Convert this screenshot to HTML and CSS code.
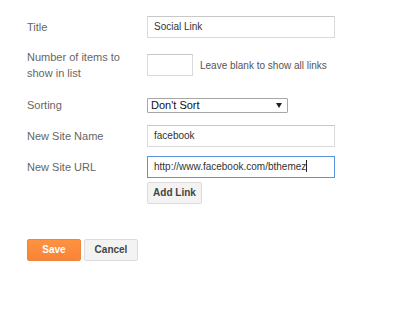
FILE: index.html
```html
<!DOCTYPE html>
<html>
<head>
<meta charset="utf-8">
<link rel="stylesheet" href="styles.css">
</head>
<body>
<div class="form">
  <div class="row r-title">
    <div class="label">Title</div>
    <div class="field"><div class="input wide">Social Link</div></div>
  </div>
  <div class="row r-num">
    <div class="label">Number of items to<br>show in list</div>
    <div class="field"><div class="input small"></div><span class="hint">Leave blank to show all links</span></div>
  </div>
  <div class="row r-sort">
    <div class="label">Sorting</div>
    <div class="field">
      <div class="select"><span>Don't Sort</span>
        <svg class="arrow" width="6" height="5" viewBox="0 0 6 5"><path d="M0 0H6L3 5Z" fill="#222"/></svg>
      </div>
    </div>
  </div>
  <div class="row r-name">
    <div class="label">New Site Name</div>
    <div class="field"><div class="input wide">facebook</div></div>
  </div>
  <div class="row r-url">
    <div class="label">New Site URL</div>
    <div class="field"><div class="input wide focus">http://www.facebook.com/bthemez<span class="caret"></span></div></div>
  </div>
  <div class="row r-add">
    <div class="label"></div>
    <div class="field"><div class="btn add">Add Link</div></div>
  </div>
  <div class="actions">
    <div class="btn save">Save</div>
    <div class="btn cancel">Cancel</div>
  </div>
</div>
</body>
</html>
```
FILE: styles.css
```css
html, body {
  margin: 0;
  padding: 0;
  background: #fff;
}
body {
  font-family: "Liberation Sans", Arial, sans-serif;
  font-size: 11px;
  color: #666;
}
.form {
  padding: 16px 0 0 27px;
}
.row {
  display: flex;
  align-items: center;
}
.label {
  width: 120px;
  line-height: 16px;
  color: #666;
}
.field {
  display: flex;
  align-items: center;
}
.input {
  box-sizing: border-box;
  height: 22px;
  border: 1px solid #dadada;
  border-top-color: #c8c8c8;
  background: #fff;
  color: #333;
  padding: 0 6px;
  font-size: 10px;
  line-height: 20px;
  white-space: nowrap;
}
.input.wide { width: 188px; }
.input.small { width: 46px; }
.input.focus { border-color: #5b93e0; }
.caret {
  display: inline-block;
  width: 1px;
  height: 12px;
  background: #222;
  vertical-align: -2px;
}
.hint {
  margin-left: 7px;
  font-size: 10px;
  color: #555;
}
.select {
  box-sizing: border-box;
  width: 141px;
  height: 15px;
  border: 1px solid #a6a6a6;
  border-radius: 1px;
  display: flex;
  align-items: center;
  justify-content: space-between;
  padding: 0 5px 0 3px;
  font-size: 11px;
  color: #111;
  line-height: 13px;
}
.arrow { display: block; }
.r-num { margin-top: 11px; }
.r-sort { margin-top: 16px; }
.r-name { margin-top: 12px; }
.r-url { margin-top: 9px; }
.r-add { margin-top: 4px; }
.btn {
  box-sizing: border-box;
  height: 22px;
  line-height: 20px;
  border: 1px solid #dcdcdc;
  background: #f3f3f3;
  color: #444;
  font-weight: bold;
  text-align: center;
  border-radius: 2px;
  font-size: 10px;
}
.btn.add { width: 55px; }
.actions {
  display: flex;
  gap: 3px;
  margin-top: 35px;
}
.btn.save {
  width: 54px;
  background: linear-gradient(#fe9240, #f8843a);
  border-color: #f0843a;
  color: #fff;
}
.btn.cancel { width: 54px; }
```
